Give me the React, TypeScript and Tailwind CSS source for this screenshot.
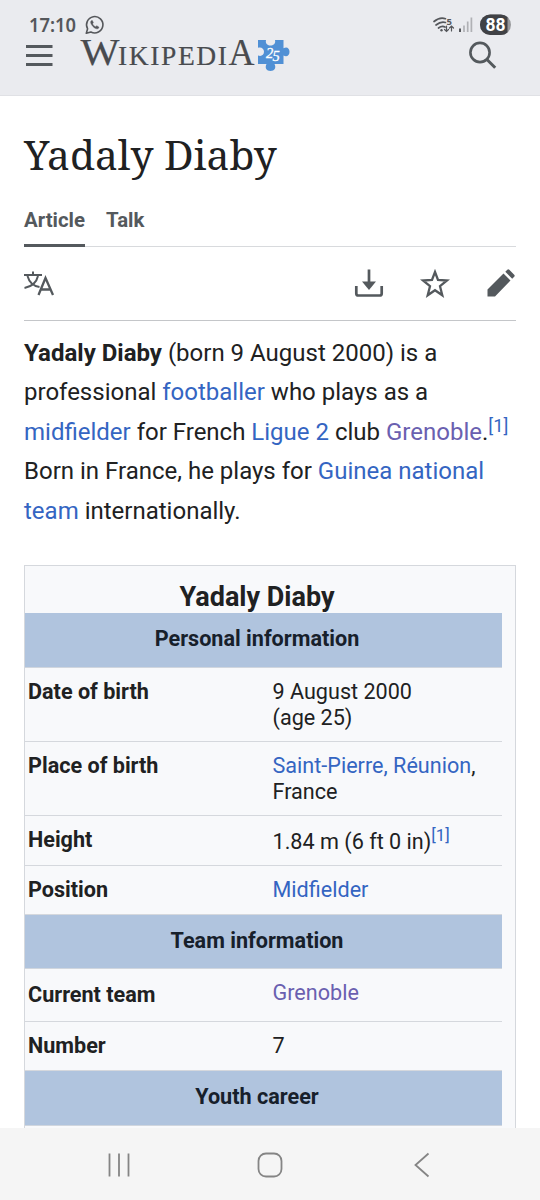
import React from "react";

function Link({ children, visited = false }: { children: React.ReactNode; visited?: boolean }) {
  return <a className={visited ? "text-[#6a60b0]" : "text-[#3465c2]"}>{children}</a>;
}

function Header() {
  return (
    <header className="h-24 shrink-0 bg-[#eaebef] border-b border-[#e0e1e5]">
      <svg width="540" height="95" viewBox="0 0 540 95" fill="none">
        <text x="29" y="32" fontFamily="Noto Sans, sans-serif" fontWeight="600" fontSize="19.5" fill="#55575b" textLength="47" lengthAdjust="spacingAndGlyphs">17:10</text>
        <g stroke="#55575b" strokeWidth="1.6">
          <path d="M86.3 33.3l1.3-4.5a8.2 8.2 0 1 1 3.3 3.2z" strokeLinejoin="round" />
          <path d="M91.5 20.6c-1.5 1-1 3 .8 5.200s4.300 3.800 6 2.600l.7-1.200-2.200-1.500-1.200 1c-1.500-.5-2.500-1.600-3-3l.8-1-1-2.100z" fill="#55575b" strokeWidth=".4" />
        </g>
        <path d="M26 46.500h26.500M26 55.500h26.500M26 64.500h26.500" stroke="#54595d" strokeWidth="2.900" />
        <g fill="#494b4f" stroke="#494b4f" strokeWidth=".2" fontFamily="Liberation Serif, serif">
          <text x="80.500" y="64.500" fontSize="37" textLength="39" lengthAdjust="spacingAndGlyphs">W</text>
          <text x="118" y="64.500" fontSize="27.500" textLength="109" lengthAdjust="spacing">IKIPEDI</text>
          <text x="228.500" y="64.500" fontSize="37" textLength="26" lengthAdjust="spacingAndGlyphs">A</text>
        </g>
        <path d="M258 40h8c-1 4 2 5.500 4.500 5.500s5.500-1.500 4.500-5.500h8.500v8.300c3-2 6-.5 6 3.500s-3 5.500-6 3.700V64h-9c2 4 0 7-4 7s-6-3-4-7H258v-8.500c3 1.300 6-.3 6-3.700s-3-5.200-6-4z" fill="#5090d5" />
        <g fill="#fff" stroke="#fff" strokeWidth=".3" fontFamily="Liberation Serif, serif" fontStyle="italic" fontSize="14.500">
          <text x="266" y="58">2</text>
          <text x="272.500" y="60.500">5</text>
        </g>
        <g stroke="#55575b" strokeLinecap="round" strokeWidth="1.700">
          <path d="M434 21.500q6-5 11.500-2.800M436 25q5-4 9.500-2.500M438.500 28q3.500-2.500 6.500-1" />
          <path d="M446.500 26v5M444.500 29.500l2 2 2-2M451.500 31v-5M449.500 28l2-2 2 2" strokeWidth="1.200" />
        </g>
        <circle cx="441.500" cy="30.300" r="1.200" fill="#55575b" />
        <text x="446.500" y="25" fontFamily="Noto Sans, sans-serif" fontWeight="700" fontSize="9.500" fill="#55575b">5</text>
        <path d="M460 28.500v3.500" stroke="#55575b" strokeWidth="2" />
        <path d="M464 25.500v6.500M467.700 21.500v10.500M471.400 17.500v14.500" stroke="#b0b1b5" strokeWidth="1.700" />
        <rect x="480" y="14.500" width="31" height="20.500" rx="10.200" fill="#98999c" />
        <path d="M490.200 14.500h10.600q4 0 6.700 2.500v15.500q-2.700 2.500-6.700 2.500h-10.600a10.250 10.250 0 0 1 0-20.500z" fill="#404145" />
        <text x="485.500" y="30.500" fontFamily="Roboto, sans-serif" fontWeight="700" fontSize="17.500" fill="#fff" textLength="20">88</text>
        <circle cx="480" cy="52.500" r="9.600" stroke="#54595d" strokeWidth="2.600" />
        <path d="M486.700 59.300l8.500 8.500" stroke="#54595d" strokeWidth="3" />
      </svg>
    </header>
  );
}

function Toolbar() {
  return (
    <div className="flex h-[74px] items-center justify-between border-b-[1.500px] border-[#c4c6c9] text-[#54595d]">
      <svg width="32" height="32" viewBox="0 0 32 32" fill="none" stroke="currentColor" strokeWidth="2">
        <path d="M0 7h18M9 3.500v3.500M3.500 8C5 13.500 9 18 15.500 19M14 8C12.500 14.500 8 18.500 .5 20" />
        <path d="M14.500 27l7-17 7.500 17M17 21.500h9.500" strokeWidth="2.300" />
      </svg>
      <div className="flex items-center gap-9">
        <svg width="30" height="30" viewBox="0 0 30 30" fill="none" stroke="currentColor" strokeWidth="2.700">
          <path d="M2.300 17v7.500q0 2 2 2h21.400q2 0 2-2V17M15 .5v13" />
          <path d="M8 12.500h14l-7 8.500z" fill="currentColor" stroke="none" />
        </svg>
        <svg width="30" height="30" viewBox="0 0 30 30" fill="none" stroke="currentColor" strokeWidth="2.300">
          <path d="M15 3l3 8 9 .5-7 5.700 2.300 9-7.300-5-7.300 5 2.300-9-7-5.700 9-.5z" />
        </svg>
        <svg width="30" height="30" viewBox="0 0 30 30" fill="currentColor">
          <path d="M1.500 20.500L17.500 4.500l7 7L9 27.500H1.500zM19.300 2.800l2-2q1-1 2 0l4.900 4.900q1 1 0 2l-2 2z" />
        </svg>
      </div>
    </div>
  );
}

function Section({ title, size }: { title: string; size: string }) {
  return (
    <div className={`flex items-center justify-center bg-[#b0c4de] border-b border-[#d0d6de] pr-[13px] font-bold text-[#17202b] ${size}`}>{title}</div>
  );
}

function Row({ label, size, children, pad = "pt-[11px]" }: { label: string; size: string; children: React.ReactNode; pad?: string }) {
  return (
    <div className={`flex whitespace-nowrap border-b border-[#d5d8dd] leading-[26px] ${size}`}>
      <div className={`w-[244.500px] shrink-0 pl-[3px] font-bold ${pad}`}>{label}</div>
      <div className="pl-[3px] pt-[11px]">{children}</div>
    </div>
  );
}

export default function App() {
  return (
    <div className="flex h-[1200px] w-[540px] flex-col overflow-hidden bg-white font-['Roboto',sans-serif] text-[#202122]">
      <Header />
      <main className="min-h-0 flex-1 overflow-hidden px-6">
        <h1 className="mt-[29px] h-[61px] whitespace-nowrap font-['Noto_Serif','DejaVu_Serif',serif] text-[40.700px] leading-[58px]">Yadaly Diaby</h1>
        <nav className="flex h-[61px] gap-[21px] border-b-[1.500px] border-[#d8dadd] text-[20.400px] font-bold text-[#54595d]">
          <div className="h-[61px] border-b-[3px] border-[#54595d] pt-[19px]">Article</div>
          <div className="pt-[19px]">Talk</div>
        </nav>
        <Toolbar />
        <div className="mt-[12.500px] whitespace-nowrap text-[24px] leading-[39.600px]">
          <div><b>Yadaly Diaby</b> (born 9 August 2000) is a</div>
          <div>professional <Link>footballer</Link> who plays as a</div>
          <div><Link>midfielder</Link> for French <Link>Ligue 2</Link> club <Link visited>Grenoble</Link>.<span className="align-[8px] text-[18.500px] leading-none"><Link>[1]</Link></span></div>
          <div>Born in France, he plays for <Link>Guinea national</Link></div>
          <div><Link>team</Link> internationally.</div>
        </div>
        <section className="mt-[33.500px] h-[700px] border-[1.500px] border-[#d5d8dd] bg-[#f8f9fb] pr-[13px] text-[21.600px]">
          <div className="flex h-[47px] items-end justify-center pr-[13px] text-[27px] font-bold leading-[32px]">Yadaly Diaby</div>
          <Section title="Personal information" size="h-[55px] pb-px" />
          <Row label="Date of birth" size="h-[74px]">9 August 2000<br />(age 25)</Row>
          <Row label="Place of birth" size="h-[74px]"><Link>Saint-Pierre, Réunion</Link>,<br />France</Row>
          <Row label="Height" size="h-[50px]">1.84 m (6 ft 0 in)<span className="align-[7.500px] text-[17px] leading-none"><Link>[1]</Link></span></Row>
          <Row label="Position" size="h-[49px]"><Link>Midfielder</Link></Row>
          <Section title="Team information" size="h-[54px]" />
          <Row label="Current team" size="h-[53px]" pad="pt-[13px]"><Link visited>Grenoble</Link></Row>
          <Row label="Number" size="h-[49px]">7</Row>
          <Section title="Youth career" size="h-[55px] pb-px" />
        </section>
      </main>
      <footer className="h-[72px] shrink-0 bg-[#f5f5f5]">
        <svg width="540" height="72" viewBox="0 0 540 72" fill="none" stroke="#858585" strokeWidth="1.800">
          <path d="M109.500 25.500v23M119 25.500v23M128.500 25.500v23" />
          <rect x="258.500" y="25.500" width="23" height="23" rx="7.500" />
          <path d="M428.500 25.500l-13 11.500 13 11.500" />
        </svg>
      </footer>
    </div>
  );
}
